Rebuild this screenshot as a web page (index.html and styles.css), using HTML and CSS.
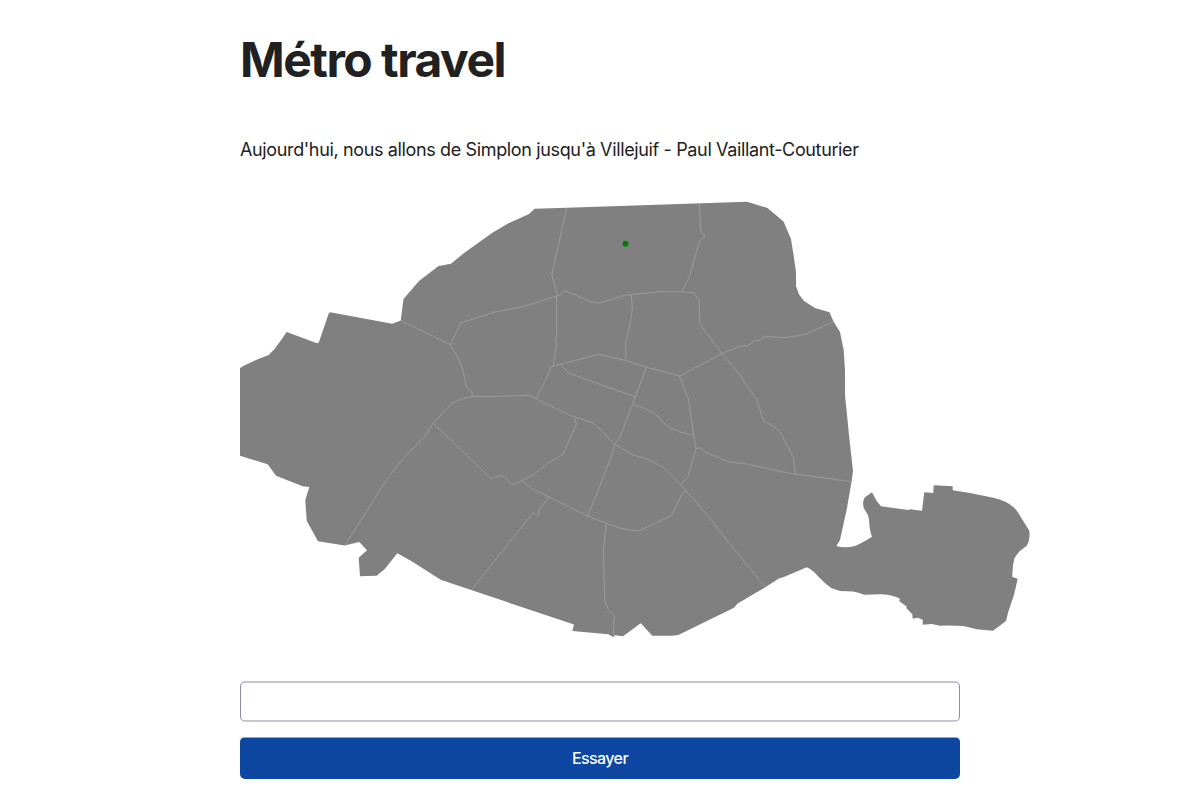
FILE: index.html
```html
<!DOCTYPE html>
<html lang="fr">
<head>
<meta charset="utf-8">
<title>Métro travel</title>
<link rel="stylesheet" href="styles.css">
</head>
<body>
<main class="page">
  <h1 class="title">Métro travel</h1>
  <p class="intro">Aujourd'hui, nous allons de Simplon jusqu'à Villejuif - Paul Vaillant-Couturier</p>
  <svg class="map" viewBox="240 190 800 460" role="img" aria-label="Paris">
    <path class="land" d="M400.7 320.5L403.5 299L419 281L438.5 266L451 263.8L464 253L492 233L508 223.5L529 214L534.5 208.8L567 207.8L747 201.7L767.5 208L783.5 221.5L791 239L794 258L796 272L796 286L799 294.5L804 301L815 308L829.5 312.3L833.5 321.5L840 332L843.7 350L845 370L845 395L849 435L853 471L851.5 482L847 508L840 540L836.3 546Q845 548.5 855 546Q862 543 872 536.7Q869.8 532 869 520Q869 516 866.3 512.3Q863 508 863 503Q863.5 498 866 496.5L872 492.3L876.7 501L881 506.3L908.3 510L910 509.3L922 510.7L924.3 492.2L933.3 493L933.7 485.2L952.7 486.2L952.7 490.3L970 493L993.3 497.7Q1007 501 1013.3 507Q1017 510 1020 515.7L1029.3 530.7Q1030.3 540 1026.7 545.7L1019 551.7L1014.7 557.7Q1012.3 565 1012.3 577L1017.7 578.7L1014 595L1008.3 611.7L1006 621L993 630.7L976.7 629.3L963.3 626Q950 625 940 625.7L931.7 624L922.7 624.7L922.7 619.7L917.7 617.7L912.7 618.7L912.3 614.3L906 607.7L907 606.7L899.3 601.3L900 598.7Q893 595 881.7 594.3L864.3 594.7Q858 592 853.3 591.4L840 591L831.7 588.3Q825 584 814 572Q810 568.4 806.7 567.3L783.3 577.3L779.3 578.3L765.3 587.3L737.3 603.7L734 607.7L678.3 635L671.7 635.7L652.3 635.7L640.7 623.3L623 636.3L614.5 635.3L614 637.5L608.3 634.3L572.3 631L574 624.5L460 586.3L440.7 579.7L411.7 561.3L397.3 553.3L385 568.7L376.7 575.7L360 576.2L358.7 557.7L367 550.3L359.3 542L344.7 545.5L318 541.2L306.7 520.7L305.3 500L309.3 487L302.7 486.3L276 475.7L267.7 464.3L240 455.7L240 368.3L242.7 366.3L257.7 359.3L268.7 355L274.3 349.3L281 340.3L286.7 332L317 343.3L318.8 342.5L328.8 313.2L330.2 312.2L392.3 323.7Z"/>
    <g class="borders">
      <path d="M401 320.5L450.5 344.7L458 358L463 370L466.3 386.7L472 391.7L472.3 396.4"/>
      <path d="M450.5 344.7L460.7 323L495 312L522.3 306.7L557.7 295.7L560 295L564.7 290.7L575.7 295L590.7 301.7L598.7 303.3L623.3 295.7L631.5 294.5L660 291.7L681.7 291.7L693.7 292.7L696.3 297L699.3 299.3L699.7 323.7L722 353.7L741.7 376.7L744.3 382.3L756.7 399.3L763.7 421.3L773.3 426L780 431.7L793.3 457.3L795.7 474.3"/>
      <path d="M566.7 207.8L551.7 275L557.7 295.7M699.4 203.4L700.7 230.3L704.7 236L699.7 241L688.7 278.7L681.7 291.7M631.4 294.5L632.3 309L629.5 328L626 340L625.6 360.4"/>
      <path d="M556.7 296L556.6 335L555.7 340L556.3 345L553.3 365.7M536.3 398.7L550 370.7L550.7 367L560.3 364.3L599 354.3L625.4 360.4L646.4 367.3L676.7 375L679.5 376L722 353.7L737.3 347.3L748.3 345.3L755 340.3L760 340.3L765.7 336.3L783.3 337.7L796.7 336L806.7 333.7L833.5 321.7"/>
      <path d="M560.3 364.3L569 373.3L635 396.7M646.4 367.3L623.3 428.3L619.3 438.3L614.5 444.3L610 460L590.7 509.3L588.3 512.3L588.3 516.3"/>
      <path d="M634 404.5L644 408.3L655.3 414L665 424.3Q672 429.5 680 432L693.7 435.7M679.5 376L688.3 398.7L693.7 435.7L696 448.5L688 477L680.5 484.5M696 448.3L700.3 448L707 453L730 462L746.7 464L788 473L851.5 481.7"/>
      <path d="M345 545.3L387 479L402 460L427 434L429 429L433.3 423.3L448 407.3Q455 400 465 398L472 396.5L500 396.5L529 395.4L536.3 398.7L567 414L575.7 417.5L592 422.3L602 430.7L610 440L614.5 444.3L633 455L647 459L664 467.7L680.5 484.5L708.5 516L723.3 536L765.5 587.2"/>
      <path d="M685.7 490.7L682.7 493L671.7 515.3L638.3 531.3L620 528L606.3 523.3L588.3 516.3L549 497L531.7 488.3L522.3 481M433.3 423.3L491.3 478.9L501.7 475L512.7 485L533 475L547 464L563.3 454L570 438L576.7 423.3L574.7 422L575.7 417.5"/>
      <path d="M549 497L538.7 510L538.5 515L536 515.7L533.3 512.3L472 589.3M606.3 523.3L603.5 550L604.7 600L608 609L614.3 616L613.3 637"/>
    </g>
    <circle class="station" cx="625.5" cy="243.7" r="3"/>
  </svg>
  <form class="guess">
    <input class="answer" type="text" aria-label="Station">
    <button class="submit" type="button">Essayer</button>
  </form>
</main>
</body>
</html>
```
FILE: styles.css
```css
* { box-sizing: border-box; }
body {
  margin: 0;
  background: #fff;
  color: #212121;
  font-family: Inter, "Liberation Sans", sans-serif;
  overflow: hidden;
}
.page { width: 720px; margin: 0 auto; }
.title {
  margin: 0;
  padding-top: 33px;
  font-size: 48px;
  line-height: 53px;
  font-weight: 700;
  letter-spacing: -1.5px;
  white-space: nowrap;
}
.intro {
  margin: 50px 0 0;
  font-size: 18px;
  line-height: 27px;
  letter-spacing: -0.36px;
  white-space: nowrap;
}
.map {
  display: block;
  width: 800px;
  height: 460px;
  margin-top: 27px;
}
.land { fill: #808080; }
.borders {
  fill: none;
  stroke: #b4b4b4;
  stroke-width: 0.5;
}
.station { fill: #008000; }
.guess {
  display: flex;
  flex-direction: column;
  gap: 15px;
  padding-top: 32px;
}
.answer {
  width: 100%;
  height: 40px;
  border: 1px solid #898ea4;
  border-radius: 5px;
  background: #fff;
  transform: translateY(-0.5px) scaleY(1.001);
}
.submit {
  width: 100%;
  height: 42px;
  padding: 0;
  border: 0;
  border-radius: 5px;
  background: linear-gradient(#8aa5d1 1px, #0d47a1 1px);
  color: #fff;
  font: 500 16px/42px Inter, "Liberation Sans", sans-serif;
  letter-spacing: -0.6px;
}
```
